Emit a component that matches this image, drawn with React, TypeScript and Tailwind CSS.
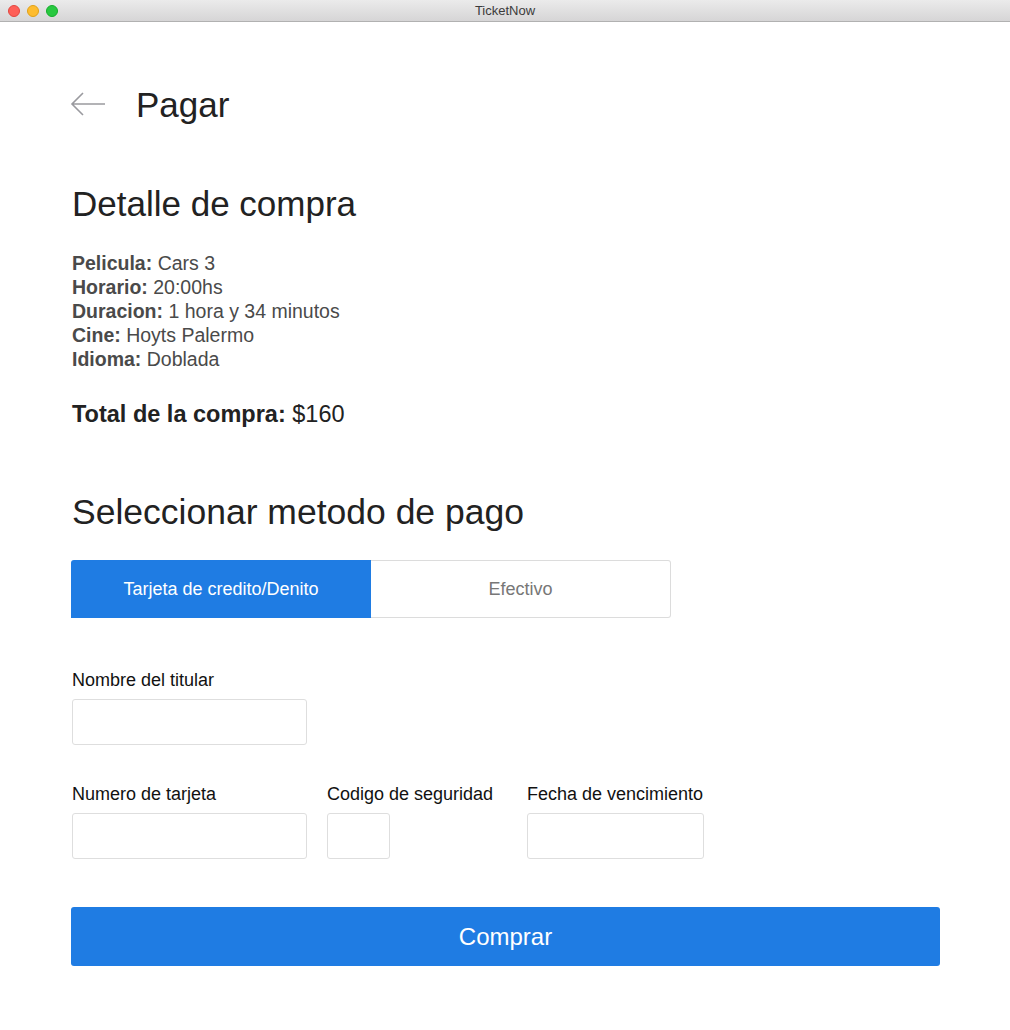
import React from "react";

export default function App() {
  const details: [string, string][] = [
    ["Pelicula:", "Cars 3"],
    ["Horario:", "20:00hs"],
    ["Duracion:", "1 hora y 34 minutos"],
    ["Cine:", "Hoyts Palermo"],
    ["Idioma:", "Doblada"],
  ];
  return (
    <div className="w-[1010px] h-[1030px] bg-white flex flex-col" style={{ fontFamily: '"Liberation Sans", Arial, sans-serif' }}>
      <div className="h-[22px] flex items-center relative bg-gradient-to-b from-[#ebebeb] to-[#d6d5d6] border-b border-[#b1b1b1] shrink-0">
        <div className="flex items-center gap-[7px] pl-[8px]">
          <div className="w-[12px] h-[12px] rounded-full bg-[#fe5f57] border border-[#e2463f]" />
          <div className="w-[12px] h-[12px] rounded-full bg-[#febc2e] border border-[#e1a116]" />
          <div className="w-[12px] h-[12px] rounded-full bg-[#28c840] border border-[#14ae2a]" />
        </div>
        <div className="absolute inset-0 flex items-center justify-center text-[13px] text-[#3b3b3b]">TicketNow</div>
      </div>
      <div className="pl-[72px] pr-[70px] flex flex-col">
        <div className="flex items-center mt-[64px] h-[36px]">
          <svg width="36" height="24" viewBox="0 0 36 24" className="ml-[-2px]">
            <path d="M35 12H2M13 1L2 12l11 11" fill="none" stroke="#9a9a9f" strokeWidth="1.6" />
          </svg>
          <span className="ml-[30px] text-[35px] text-[#222] leading-none">Pagar</span>
        </div>
        <div className="mt-[62px] text-[35px] text-[#222] leading-[40px]">Detalle de compra</div>
        <div className="mt-[27px] flex flex-col text-[19.5px] leading-[24px] text-[#4a4a4a]">
          {details.map(([k, v]) => (
            <div key={k}>
              <span className="font-bold">{k}</span> {v}
            </div>
          ))}
        </div>
        <div className="mt-[30px] text-[23.5px] leading-[26px] text-[#222]">
          <span className="font-bold">Total de la compra:</span> $160
        </div>
        <div className="mt-[65px] text-[35.5px] text-[#222] leading-[40px]">Seleccionar metodo de pago</div>
        <div className="mt-[28px] flex ml-[-1px]">
          <div className="w-[300px] h-[58px] bg-[#1f7ce3] text-white text-[18px] flex items-center justify-center rounded-tl-[3px]">Tarjeta de credito/Denito</div>
          <div className="w-[300px] h-[58px] border border-[#dcdcdc] border-l-0 text-[#777] text-[18px] flex items-center justify-center rounded-r-[3px]">Efectivo</div>
        </div>
        <div className="mt-[52px] flex flex-col">
          <div className="text-[18px] text-[#111] leading-[20px]">Nombre del titular</div>
          <div className="mt-[9px] w-[235px] h-[46px] border border-[#dedede] rounded-[3px]" />
        </div>
        <div className="mt-[39px] flex">
          <div className="flex flex-col w-[255px]">
            <div className="text-[18px] text-[#111] leading-[20px]">Numero de tarjeta</div>
            <div className="mt-[9px] w-[235px] h-[46px] border border-[#dedede] rounded-[3px]" />
          </div>
          <div className="flex flex-col w-[200px]">
            <div className="text-[18px] text-[#111] leading-[20px] whitespace-nowrap">Codigo de seguridad</div>
            <div className="mt-[9px] w-[63px] h-[46px] border border-[#dedede] rounded-[3px]" />
          </div>
          <div className="flex flex-col">
            <div className="text-[18px] text-[#111] leading-[20px] whitespace-nowrap">Fecha de vencimiento</div>
            <div className="mt-[9px] w-[177px] h-[46px] border border-[#dedede] rounded-[3px]" />
          </div>
        </div>
        <div className="mt-[48px] ml-[-1px] w-[869px] h-[59px] bg-[#1f7ce3] rounded-[3px] text-white text-[24px] flex items-center justify-center">Comprar</div>
      </div>
    </div>
  );
}
